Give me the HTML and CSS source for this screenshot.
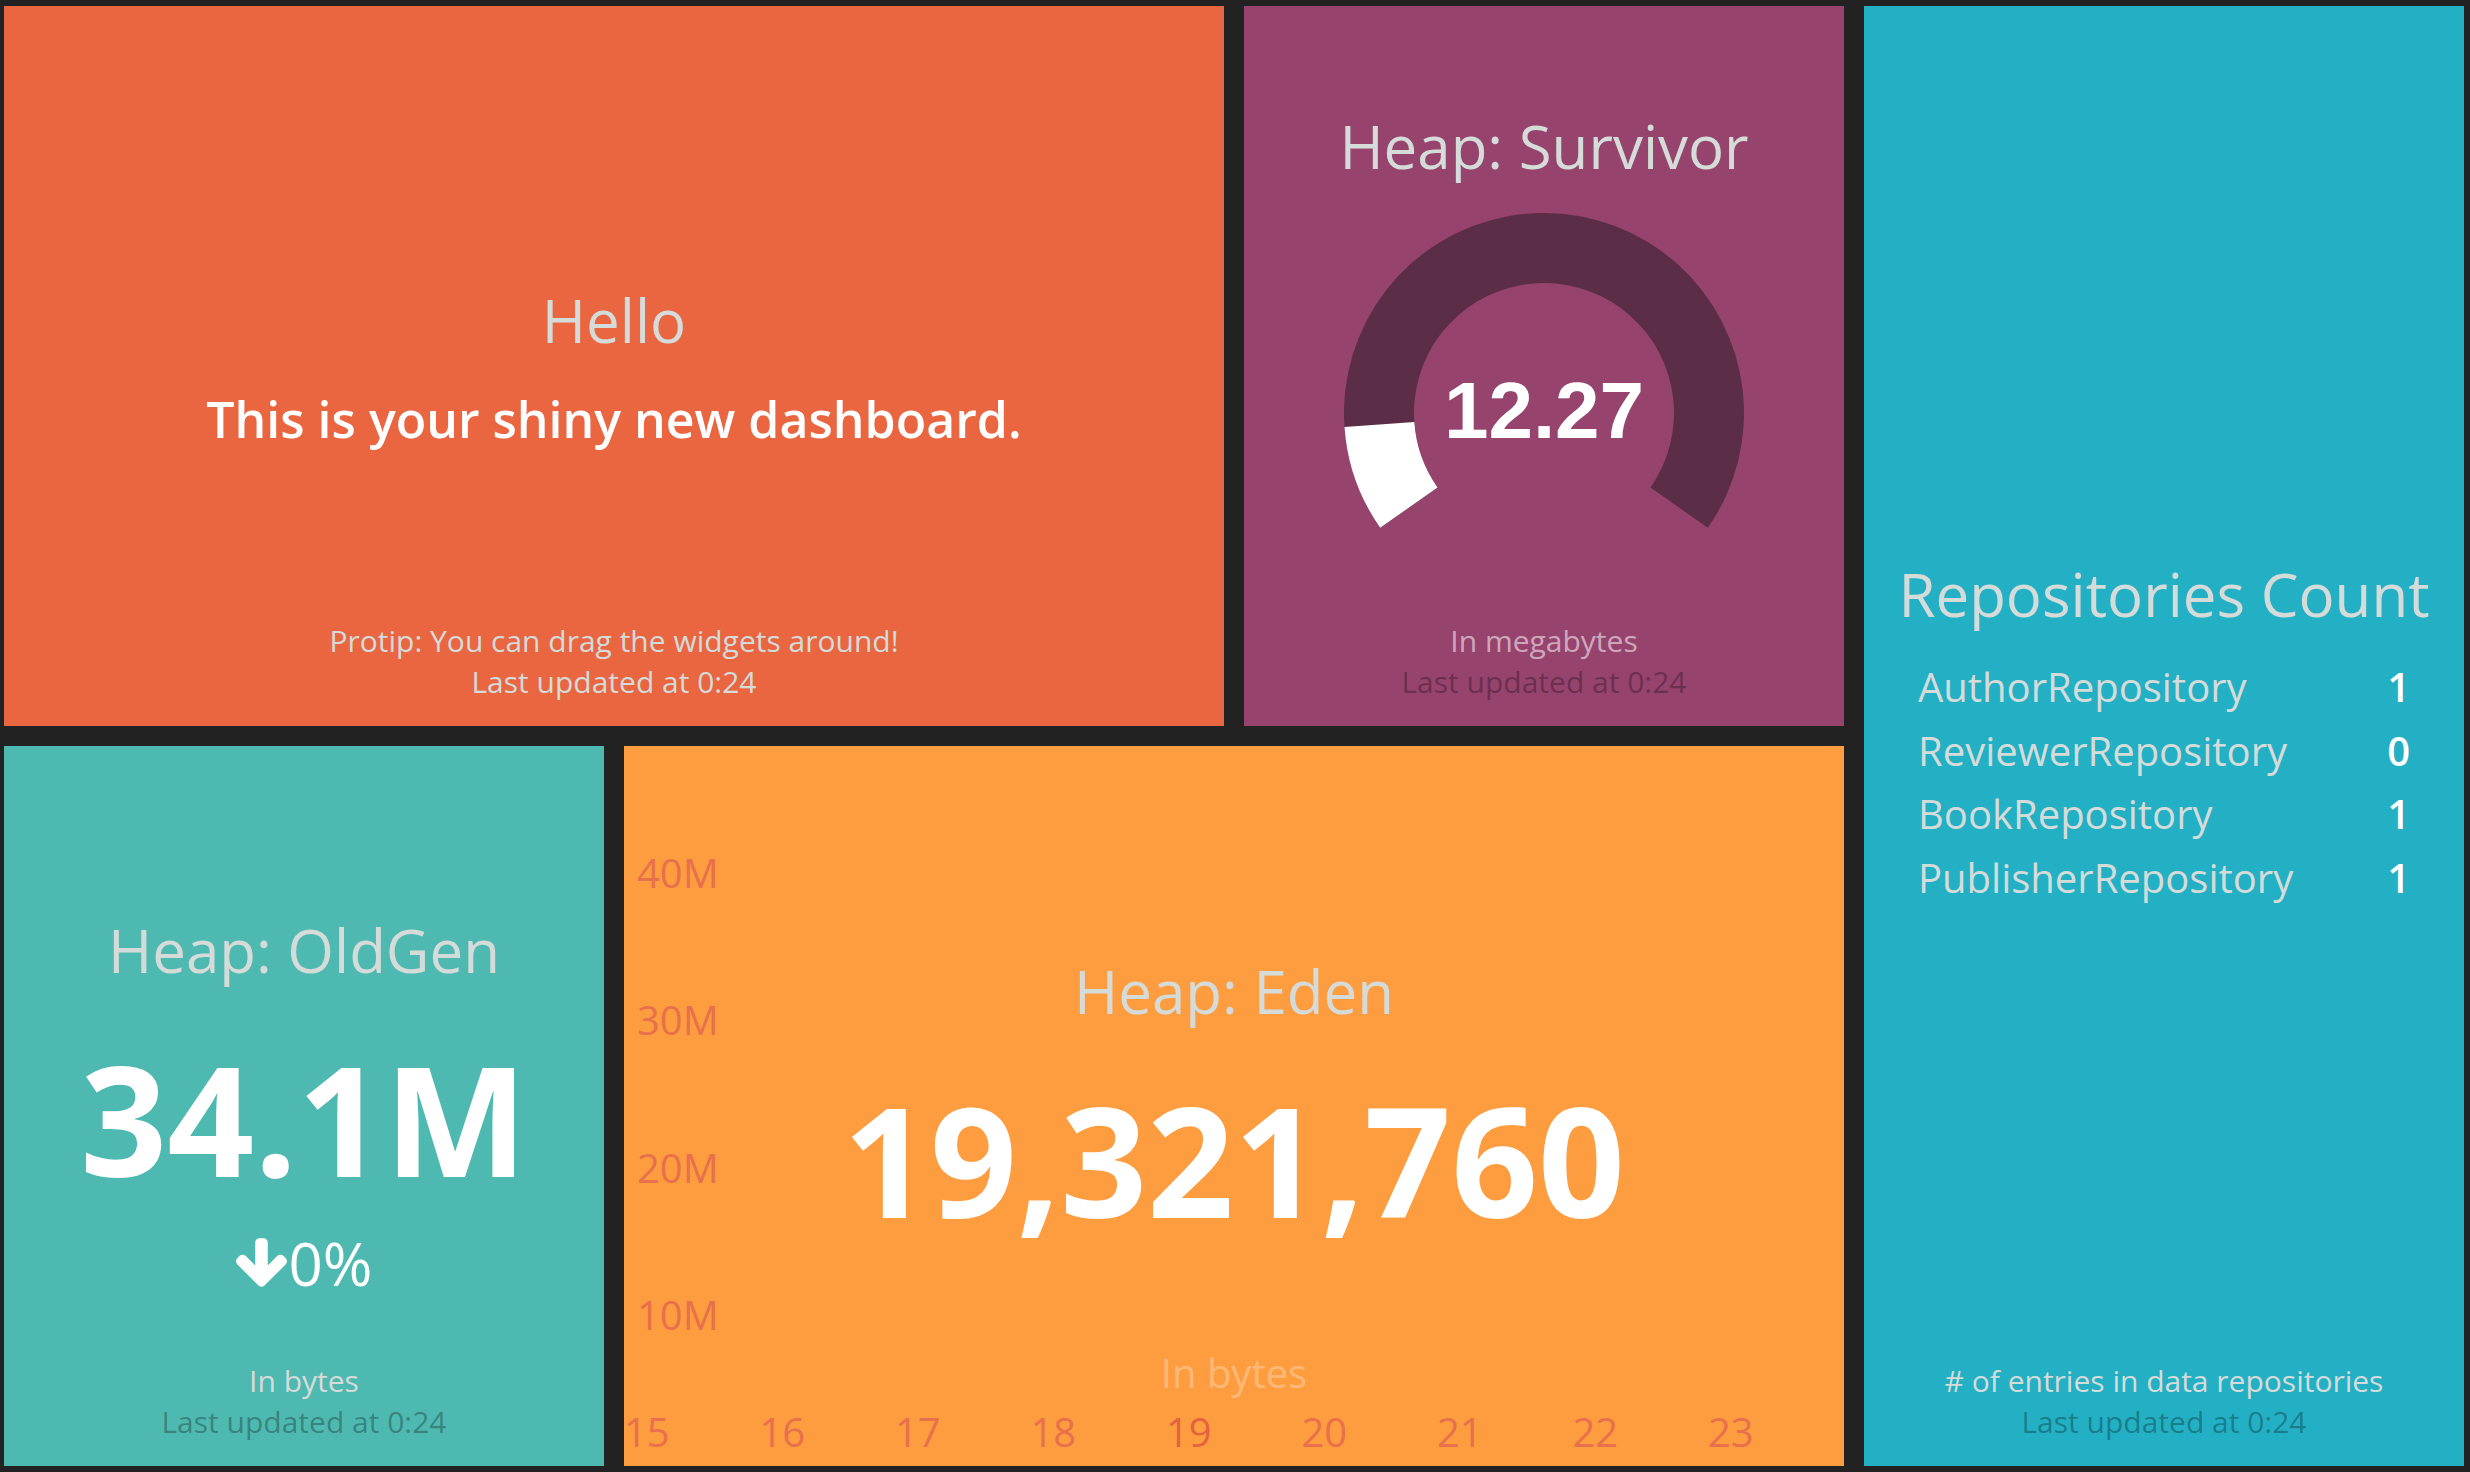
FILE: index.html
```html
<!DOCTYPE html>
<html lang="en">
<head>
<meta charset="utf-8">
<title>Dashboard</title>
<link rel="stylesheet" href="styles.css">
</head>
<body>
<main class="dashboard">
  <section class="widget widget-text">
    <div class="content">
      <h1 class="title">Hello</h1>
      <h3 class="text">This is your shiny new dashboard.</h3>
    </div>
    <div class="footer">
      <p class="more-info">Protip: You can drag the widgets around!</p>
      <p class="updated-at">Last updated at 0:24</p>
    </div>
  </section>

  <section class="widget widget-meter">
    <div class="content">
      <h1 class="title">Heap: Survivor</h1>
      <svg class="knob" width="400" height="400" viewBox="0 0 400 400">
        <path class="knob-bg" d="M36.17 314.72 A200 200 0 1 1 363.83 314.72 L306.49 274.57 A130 130 0 1 0 93.51 274.57 Z"/>
        <path class="knob-fg" d="M36.17 314.72 A200 200 0 0 1 0.49 213.95 L70.32 209.07 A130 130 0 0 0 93.51 274.57 Z"/>
        <text class="knob-value" x="200" y="225">12.27</text>
      </svg>
    </div>
    <div class="footer">
      <p class="more-info">In megabytes</p>
      <p class="updated-at">Last updated at 0:24</p>
    </div>
  </section>

  <section class="widget widget-list">
    <div class="content">
      <h1 class="title">Repositories Count</h1>
      <ul class="list">
        <li><span class="label">AuthorRepository</span><span class="value">1</span></li>
        <li><span class="label">ReviewerRepository</span><span class="value">0</span></li>
        <li><span class="label">BookRepository</span><span class="value">1</span></li>
        <li><span class="label">PublisherRepository</span><span class="value">1</span></li>
      </ul>
    </div>
    <div class="footer">
      <p class="more-info"># of entries in data repositories</p>
      <p class="updated-at">Last updated at 0:24</p>
    </div>
  </section>

  <section class="widget widget-number">
    <div class="content">
      <h1 class="title">Heap: OldGen</h1>
      <h2 class="value-big">34.1M</h2>
      <p class="change-rate">
        <svg class="arrow" width="51" height="49" viewBox="53 128 1558 1482"><path d="M1611 832q0 53-37 90l-651 652q-38 36-91 36-54 0-90-36l-651-652q-38-36-38-90 0-53 38-91l74-75q39-37 91-37 53 0 90 37l294 294v-704q0-52 38-90t90-38h128q52 0 90 38t38 90v704l294-294q37-37 90-37 52 0 91 37l75 75q37 39 37 91z"/></svg>
        <span>0%</span>
      </p>
    </div>
    <div class="footer">
      <p class="more-info">In bytes</p>
      <p class="updated-at">Last updated at 0:24</p>
    </div>
  </section>

  <section class="widget widget-graph">
    <svg class="chart" width="1220" height="720" viewBox="0 0 1220 720">
      <text class="tick" x="13" y="142">40M</text>
      <text class="tick" x="13" y="289">30M</text>
      <text class="tick" x="13" y="437">20M</text>
      <text class="tick" x="13" y="584">10M</text>
      <text class="tick" x="0" y="701">15</text>
      <text class="tick" x="135.5" y="701">16</text>
      <text class="tick" x="271" y="701">17</text>
      <text class="tick" x="406.5" y="701">18</text>
      <text class="tick tick-strong" x="542" y="701">19</text>
      <text class="tick" x="677.5" y="701">20</text>
      <text class="tick" x="813" y="701">21</text>
      <text class="tick" x="948.5" y="701">22</text>
      <text class="tick" x="1084" y="701">23</text>
    </svg>
    <div class="content">
      <h1 class="title">Heap: Eden</h1>
      <h2 class="value-big">19,321,760</h2>
    </div>
    <div class="footer">
      <p class="more-info">In bytes</p>
    </div>
  </section>
</main>
</body>
</html>
```
FILE: styles.css
```css
html, body {
  margin: 0;
  padding: 0;
  height: 100%;
}

body {
  background: #222222;
  font-family: "Open Sans", "Liberation Sans", sans-serif;
  overflow: hidden;
}

.dashboard {
  display: grid;
  grid-template-columns: repeat(4, 600px);
  grid-template-rows: repeat(2, 720px);
  gap: 20px;
  padding: 6px 0 0 4px;
}

.widget {
  display: grid;
  grid-template-columns: minmax(0, 1fr);
  grid-template-rows: minmax(0, 1fr);
  text-align: center;
  overflow: hidden;
  color: #ffffff;
}

.widget > * {
  grid-area: 1 / 1;
}

.content {
  align-self: center;
  padding: 0 24px;
}

.footer {
  align-self: end;
  padding: 0 24px 24px;
}

.title {
  margin: 0 0 24px;
  font-size: 60px;
  font-weight: 400;
  line-height: normal;
  color: #d5dbd9;
}

p {
  margin: 0;
}

.more-info,
.updated-at {
  font-size: 30px;
  line-height: normal;
  color: #d5dbd9;
}

.updated-at {
  color: rgba(0, 0, 0, 0.3);
}

/* text widget */
.widget-text {
  grid-column: 1 / span 2;
  grid-row: 1;
  background: #e96641;
}

.widget-text .text {
  margin: 0;
  font-size: 50px;
  font-weight: 600;
  line-height: normal;
  color: #ffffff;
}

.widget-text .updated-at {
  color: #d5dbd9;
}

/* meter widget */
.widget-meter {
  grid-column: 3;
  grid-row: 1;
  background: #96436e;
}

.widget-meter .title {
  margin-bottom: 26px;
}

.knob {
  display: block;
  margin: 0 auto 14px;
}

.knob-bg {
  fill: #5c2d47;
}

.knob-fg {
  fill: #ffffff;
}

.knob-value {
  font-family: "Liberation Sans", Arial, sans-serif;
  font-weight: 700;
  font-size: 80px;
  fill: #ffffff;
  text-anchor: middle;
}

.widget-meter .more-info {
  color: rgba(255, 255, 255, 0.55);
}

/* list widget */
.widget-list {
  grid-column: 4;
  grid-row: 1 / span 2;
  background: #23b0c4;
}

.widget-list .content {
  padding-bottom: 6px;
}

.list {
  list-style: none;
  margin: 0 30px;
  padding: 0;
  text-align: left;
  font-size: 40px;
  line-height: normal;
}

.list li {
  display: flex;
  justify-content: space-between;
  margin-bottom: 8.5px;
}

.list .label {
  color: #d5dbd9;
}

.list .value {
  margin-left: 24px;
  font-weight: 600;
  color: #ffffff;
}

/* number widget */
.widget-number {
  grid-column: 1;
  grid-row: 2;
  background: #4eb9b1;
}

.value-big {
  margin: 0;
  font-size: 152px;
  font-weight: 700;
  line-height: normal;
  color: #ffffff;
}

.change-rate {
  display: flex;
  justify-content: center;
  align-items: center;
  gap: 2px;
  font-size: 60px;
  line-height: normal;
  color: #ffffff;
}

.arrow {
  fill: #ffffff;
}

/* graph widget */
.widget-graph {
  grid-column: 2 / span 2;
  grid-row: 2;
  background: #fe9d3f;
}

.chart {
  align-self: stretch;
  justify-self: stretch;
  display: block;
}

.tick {
  font-family: "Open Sans", "Liberation Sans", sans-serif;
  font-size: 40px;
  fill: #e8704c;
}

.tick-strong {
  fill: #e4633f;
}

.widget-graph .footer {
  padding-bottom: 66px;
}

.widget-graph .more-info {
  font-size: 40px;
  color: rgba(255, 255, 255, 0.3);
}
```
